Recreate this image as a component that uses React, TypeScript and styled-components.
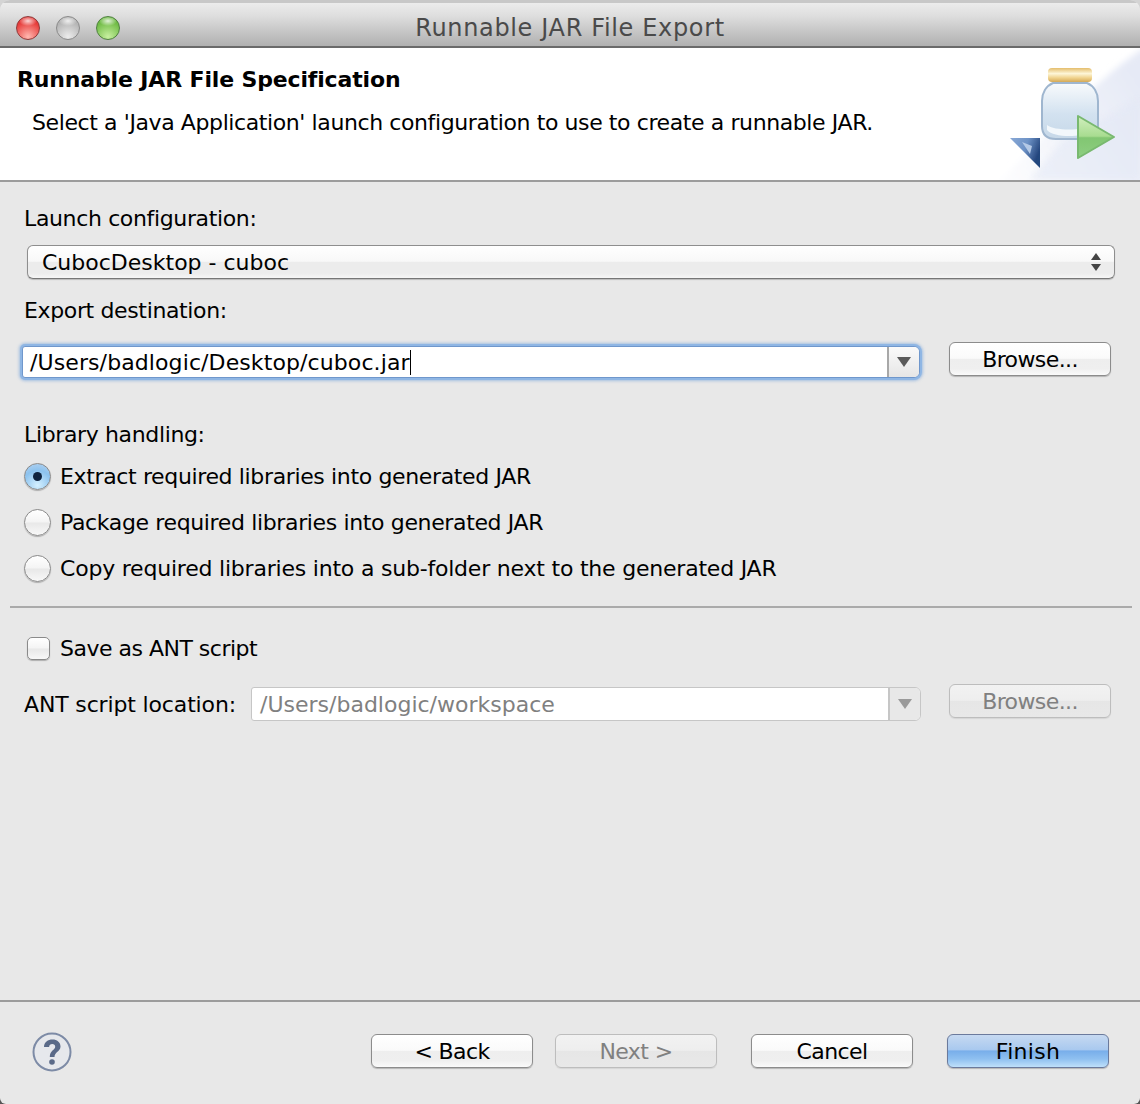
import styled, { createGlobalStyle } from 'styled-components';

const GlobalStyle = createGlobalStyle`
  html {
    background: linear-gradient(#d4d4d4 50%, #555 50%);
  }

  body {
    margin: 0;
    padding: 0;
  }
`;

const Window = styled.div`
  width: 1140px;
  height: 1104px;
  display: flex;
  flex-direction: column;
  overflow: hidden;
  background: #e8e8e8;
  border-radius: 10px 10px 6px 6px;
  color: #000;
  font-family: 'DejaVu Sans', sans-serif;
  font-size: 22px;
  letter-spacing: -0.36px;
`;

const TitleBar = styled.div`
  height: 48px;
  box-sizing: border-box;
  flex: none;
  display: flex;
  align-items: center;
  position: relative;
  padding: 6px 0 0 16px;
  gap: 16px;
  background: linear-gradient(#ececec 0%, #dedede 30%, #b0b0b0 100%);
  border-top: 3px solid #c8c8c8;
  border-bottom: 2px solid #6a6a6a;
`;

const TrafficLight = styled.span<{ $base: string; $edge: string; $glow: string }>`
  width: 24px;
  height: 24px;
  box-sizing: border-box;
  border-radius: 50%;
  border: 1px solid ${({ $edge }) => $edge};
  background:
    radial-gradient(ellipse 9px 5px at 50% 18%, rgba(255, 255, 255, 0.8), rgba(255, 255, 255, 0) 100%),
    radial-gradient(circle at 50% 90%, ${({ $glow }) => $glow}, ${({ $base }) => $base} 70%);
`;

const WindowTitle = styled.div`
  position: absolute;
  left: 0;
  right: 0;
  top: 8px;
  text-align: center;
  color: #4a4a4a;
  font-size: 24px;
  letter-spacing: 0.65px;
  line-height: 34px;
`;

const Banner = styled.header`
  height: 132px;
  flex: none;
  display: flex;
  justify-content: space-between;
  background: #fff;
  border-bottom: 2px solid #9c9c9c;
`;

const BannerText = styled.div`
  padding: 17px 0 0 17px;
`;

const BannerTitle = styled.h1`
  margin: 0;
  font-size: 22px;
  font-weight: 700;
  letter-spacing: -0.15px;
  line-height: 30px;
`;

const BannerDescription = styled.p`
  margin: 13px 0 0 15px;
  line-height: 30px;
  letter-spacing: -0.4px;
`;

const Content = styled.main`
  flex: 1;
  display: flex;
  flex-direction: column;
  padding: 0 25px 0 24px;
`;

const Label = styled.div<{ $top: number }>`
  margin-top: ${({ $top }) => $top}px;
  line-height: 30px;
`;

const Select = styled.div`
  height: 34px;
  box-sizing: border-box;
  margin: 11px 0 0 3px;
  padding: 0 13px 0 14px;
  display: flex;
  align-items: center;
  justify-content: space-between;
  letter-spacing: 0;
  border: 1px solid #8e8e8e;
  border-bottom-color: #767676;
  border-radius: 6px;
  background: linear-gradient(#fff 0%, #f8f8f8 48%, #ececec 50%, #ececec 85%, #f6f6f6 100%);
  box-shadow: 0 1px 1px rgba(0, 0, 0, 0.2);
`;

const FieldRow = styled.div<{ $top: number }>`
  margin-top: ${({ $top }) => $top}px;
  display: flex;
  align-items: flex-start;
`;

const Combo = styled.div<{ $focused?: boolean; $width: number; $left: number }>`
  width: ${({ $width }) => $width}px;
  height: ${({ $focused }) => ($focused ? 32 : 34)}px;
  box-sizing: border-box;
  margin: ${({ $focused }) => ($focused ? '4px' : '3px')} 0 0 ${({ $left }) => $left}px;
  flex: none;
  display: flex;
  background: #fff;
  border: 1px solid ${({ $focused }) => ($focused ? '#6f97cc' : '#c6c6c6')};
  border-radius: 3px 6px 6px 3px;
  box-shadow: ${({ $focused }) => ($focused ? '0 0 0 2px #8fb6e4, 0 0 3px 3px rgba(120, 165, 220, 0.6)' : 'none')};
`;

const ComboInput = styled.div<{ $disabled?: boolean }>`
  flex: 1;
  padding-left: ${({ $disabled }) => ($disabled ? 8 : 7)}px;
  display: flex;
  align-items: center;
  white-space: nowrap;
  letter-spacing: ${({ $disabled }) => ($disabled ? 0 : 0.1)}px;
  color: ${({ $disabled }) => ($disabled ? '#808080' : '#000')};
`;

const Caret = styled.span`
  width: 1px;
  height: 25px;
  background: #000;
`;

const ComboArrow = styled.div<{ $disabled?: boolean }>`
  width: 32px;
  flex: none;
  display: flex;
  align-items: center;
  justify-content: center;
  box-sizing: border-box;
  border-left: 2px solid ${({ $disabled }) => ($disabled ? '#c6c6c6' : '#a8a8a8')};
  background: ${({ $disabled }) => ($disabled ? '#e8e8e8' : 'linear-gradient(#fafafa, #e6e6e6)')};
  border-radius: 0 5px 5px 0;
  color: ${({ $disabled }) => ($disabled ? '#9a9a9a' : '#5a5a5a')};
`;

const Button = styled.button<{ $variant?: 'default' | 'primary'; $disabled?: boolean }>`
  width: 162px;
  height: 34px;
  padding: 2px 0 0;
  flex: none;
  border-radius: 6px;
  font: inherit;
  letter-spacing: ${({ $variant }) => ($variant === 'primary' ? 0.3 : -0.6)}px;
  line-height: 28px;
  color: ${({ $disabled }) => ($disabled ? '#808080' : '#000')};
  border: 1px solid
    ${({ $variant, $disabled }) =>
      $variant === 'primary' ? '#6b7a9c' : $disabled ? '#bdbdbd' : '#8c8c8c'};
  box-shadow: 0 1px 1px rgba(0, 0, 0, ${({ $disabled }) => ($disabled ? 0.08 : 0.22)});
  background: ${({ $variant, $disabled }) =>
    $variant === 'primary'
      ? 'linear-gradient(#c6d9f1 0%, #a9c9ef 46%, #78aeea 50%, #8fc0f0 75%, #bfe0fa 100%)'
      : $disabled
        ? 'linear-gradient(#f2f2f2 0%, #eeeeee 48%, #e6e6e6 50%, #e8e8e8 100%)'
        : 'linear-gradient(#fff 0%, #fafafa 48%, #eeeeee 50%, #efefef 80%, #fafafa 100%)'};
`;

const BrowseSlot = styled.div<{ $left: number }>`
  margin-left: ${({ $left }) => $left}px;
`;

const RadioRow = styled.div<{ $top: number; $spacing?: number }>`
  margin-top: ${({ $top }) => $top}px;
  height: 30px;
  display: flex;
  align-items: center;
  gap: 9px;
  letter-spacing: ${({ $spacing }) => $spacing ?? -0.36}px;
`;

const Radio = styled.span<{ $checked?: boolean }>`
  width: 27px;
  height: 27px;
  box-sizing: border-box;
  flex: none;
  display: flex;
  align-items: center;
  justify-content: center;
  border-radius: 50%;
  border: 1px solid #8a8a8a;
  box-shadow: 0 1px 1px rgba(0, 0, 0, 0.25);
  background: ${({ $checked }) =>
    $checked
      ? 'radial-gradient(circle at 50% 85%, #d4f0ff 0%, #8cc2ee 60%, #b8d4f0 100%)'
      : 'linear-gradient(#fff 0%, #f4f4f4 48%, #e8e8e8 52%, #f8f8f8 100%)'};

  &::after {
    content: '';
    display: ${({ $checked }) => ($checked ? 'block' : 'none')};
    width: 9px;
    height: 9px;
    border-radius: 50%;
    background: #10233f;
  }
`;

const Separator = styled.hr<{ $top: number }>`
  margin: ${({ $top }) => $top}px -17px 0 -14px;
  height: 2px;
  border: none;
  background: #aaaaaa;
`;

const CheckRow = styled.div`
  margin-top: 25px;
  height: 30px;
  display: flex;
  align-items: center;
  gap: 10px;
  padding-left: 3px;
  letter-spacing: -0.5px;
`;

const Checkbox = styled.span`
  width: 23px;
  height: 23px;
  box-sizing: border-box;
  border-radius: 5px;
  border: 1px solid #8a8a8a;
  box-shadow: 0 1px 1px rgba(0, 0, 0, 0.25);
  background: linear-gradient(#fff 0%, #f4f4f4 48%, #e8e8e8 52%, #f8f8f8 100%);
`;

const AntRow = styled.div`
  margin-top: 21px;
  display: flex;
  align-items: flex-start;
`;

const AntLabel = styled.div`
  width: 227px;
  flex: none;
  padding-top: 6px;
  line-height: 30px;
  letter-spacing: -0.15px;
`;

const Footer = styled.footer`
  height: 104px;
  flex: none;
  box-sizing: border-box;
  display: flex;
  align-items: flex-start;
  padding: 30px 31px 0 32px;
  border-top: 2px solid #9c9c9c;
`;

const HelpIcon = styled.svg`
  width: 40px;
  height: 40px;
  flex: none;
  margin-right: 299px;
`;

const FooterButtons = styled.div`
  display: flex;
  margin-top: 2px;
`;

const FooterButtonSlot = styled.div<{ $left: number }>`
  margin-left: ${({ $left }) => $left}px;
`;

function DownArrow() {
  return (
    <svg width="14" height="10" viewBox="0 0 14 10">
      <path d="M0 0H14L7 10Z" fill="currentColor" />
    </svg>
  );
}

function UpDownArrows() {
  return (
    <svg width="10" height="18" viewBox="0 0 10 18">
      <path d="M5 0L10 7H0Z" fill="#444" />
      <path d="M0 11H10L5 18Z" fill="#444" />
    </svg>
  );
}

function JarIcon() {
  return (
    <svg width="180" height="132" viewBox="0 0 180 132">
      <defs>
        <filter id="soft" x="-10%" y="-10%" width="120%" height="120%">
          <feGaussianBlur stdDeviation="0.7" />
        </filter>
        <filter id="wash" x="-10%" y="-10%" width="120%" height="120%">
          <feGaussianBlur stdDeviation="3" />
        </filter>
        <linearGradient id="bannerWash" x1="0" y1="1" x2="1" y2="0.4">
          <stop offset="0" stopColor="#ffffff" />
          <stop offset="1" stopColor="#e6eaf6" />
        </linearGradient>
        <linearGradient id="lid" x1="0" y1="0" x2="0" y2="1">
          <stop offset="0" stopColor="#e4bd6c" />
          <stop offset="0.4" stopColor="#fdf6d8" />
          <stop offset="0.7" stopColor="#f0d38e" />
          <stop offset="1" stopColor="#d4a957" />
        </linearGradient>
        <linearGradient id="glass" x1="0" y1="0" x2="0" y2="1">
          <stop offset="0" stopColor="#f8fafc" />
          <stop offset="0.55" stopColor="#d3e2f0" />
          <stop offset="1" stopColor="#c6d8e8" />
        </linearGradient>
        <linearGradient id="play" x1="0" y1="0" x2="0" y2="1">
          <stop offset="0" stopColor="#d2efbf" />
          <stop offset="0.48" stopColor="#a8dc90" />
          <stop offset="0.52" stopColor="#82c672" />
          <stop offset="1" stopColor="#8ecf82" />
        </linearGradient>
        <linearGradient id="back" x1="0" y1="0" x2="1" y2="0.4">
          <stop offset="0" stopColor="#8aa9d6" />
          <stop offset="0.55" stopColor="#6d92c6" />
          <stop offset="1" stopColor="#24467d" />
        </linearGradient>
      </defs>
      <path d="M30 140C70 110 120 40 190 -4V140Z" fill="url(#bannerWash)" filter="url(#wash)" />
      <path d="M100 95L180 50V132H70Z" fill="#e2e7f5" opacity="0.55" filter="url(#wash)" />
      <g filter="url(#soft)">
        <rect x="88" y="20" width="44" height="14" rx="4" fill="url(#lid)" />
        <path
          d="M93 35H127C134 38 138 45 138 53V78C138 87 133 91 124 91H96C87 91 82 87 82 78V53C82 45 86 38 93 35Z"
          fill="url(#glass)"
          stroke="#9fb6cf"
          strokeWidth="2"
        />
        <path d="M87 82C94 90 124 90 130 82V77C124 83 94 83 87 77Z" fill="#f2f7fb" />
        <path d="M118 68L154 89L118 110Z" fill="url(#play)" stroke="#79b96f" strokeWidth="2" strokeLinejoin="round" />
        <path d="M50 90H80V120Z" fill="url(#back)" />
        <path d="M62 94L72 98L70 106Z" fill="#b4c9e6" />
      </g>
    </svg>
  );
}

export default function App() {
  return (
    <>
      <GlobalStyle />
      <Window>
        <TitleBar>
          <TrafficLight $base="#e63a38" $edge="#8e3a3a" $glow="#ffb8b0" />
          <TrafficLight $base="#b4b4b4" $edge="#8a8a8a" $glow="#ececec" />
          <TrafficLight $base="#6fbb45" $edge="#4f8040" $glow="#c8f0a0" />
          <WindowTitle>Runnable JAR File Export</WindowTitle>
        </TitleBar>

        <Banner>
          <BannerText>
            <BannerTitle>Runnable JAR File Specification</BannerTitle>
            <BannerDescription>
              Select a 'Java Application' launch configuration to use to create a runnable JAR.
            </BannerDescription>
          </BannerText>
          <JarIcon />
        </Banner>

        <Content>
          <Label $top={22}>Launch configuration:</Label>
          <Select>
            <span>CubocDesktop - cuboc</span>
            <UpDownArrows />
          </Select>

          <Label $top={17}>Export destination:</Label>
          <FieldRow $top={16}>
            <Combo $focused $width={898} $left={-2}>
              <ComboInput>
                /Users/badlogic/Desktop/cuboc.jar
                <Caret />
              </ComboInput>
              <ComboArrow>
                <DownArrow />
              </ComboArrow>
            </Combo>
            <BrowseSlot $left={29}>
              <Button>Browse...</Button>
            </BrowseSlot>
          </FieldRow>

          <Label $top={42}>Library handling:</Label>
          <RadioRow $top={11}>
            <Radio $checked />
            Extract required libraries into generated JAR
          </RadioRow>
          <RadioRow $top={16}>
            <Radio />
            Package required libraries into generated JAR
          </RadioRow>
          <RadioRow $top={16} $spacing={-0.21}>
            <Radio />
            Copy required libraries into a sub-folder next to the generated JAR
          </RadioRow>

          <Separator $top={23} />

          <CheckRow>
            <Checkbox />
            Save as ANT script
          </CheckRow>

          <AntRow>
            <AntLabel>ANT script location:</AntLabel>
            <Combo $width={670} $left={0}>
              <ComboInput $disabled>/Users/badlogic/workspace</ComboInput>
              <ComboArrow $disabled>
                <DownArrow />
              </ComboArrow>
            </Combo>
            <BrowseSlot $left={28}>
              <Button $disabled>Browse...</Button>
            </BrowseSlot>
          </AntRow>
        </Content>

        <Footer>
          <HelpIcon viewBox="0 0 40 40">
            <circle cx="20" cy="20" r="18.5" fill="#e6e8ec" stroke="#7d8ba6" strokeWidth="2" />
            <path
              d="M12 15C12 10 16 7.5 20.5 7.5C25 7.5 28.5 10.2 28.5 14.5C28.5 19.5 22.5 20 22.5 25H17.8C17.8 18.5 23.2 18 23.2 14.8C23.2 13 22 12 20.3 12C18.4 12 17.2 13.2 17.1 15Z"
              fill="#5a6a88"
            />
            <circle cx="20" cy="30" r="2.8" fill="#5a6a88" />
          </HelpIcon>
          <FooterButtons>
            <Button>&lt; Back</Button>
            <FooterButtonSlot $left={22}>
              <Button $disabled>Next &gt;</Button>
            </FooterButtonSlot>
            <FooterButtonSlot $left={34}>
              <Button>Cancel</Button>
            </FooterButtonSlot>
            <FooterButtonSlot $left={34}>
              <Button $variant="primary">Finish</Button>
            </FooterButtonSlot>
          </FooterButtons>
        </Footer>
      </Window>
    </>
  );
}
